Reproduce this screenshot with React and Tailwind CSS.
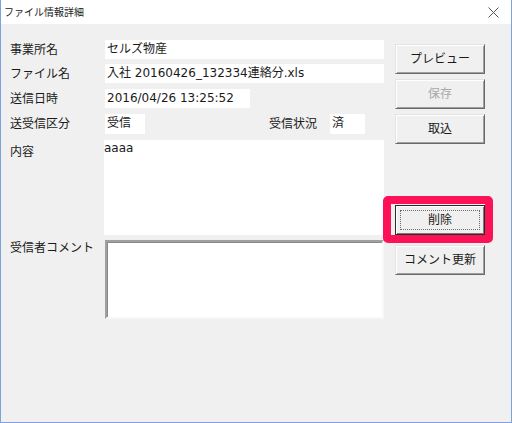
import React from 'react';

const fontCls = "font-['DejaVu_Sans','Noto_Sans_CJK_JP',sans-serif]";

// Windows クラシック風ボタン
const WinButton = ({ children, disabled = false, focused = false, className = '' }) => (
  <div
    className={`relative flex items-center justify-center w-[90px] h-[30px] bg-[#f0f0f0] text-[12px] border ${
      focused
        ? 'border-[#2b2b2b] shadow-[inset_1px_1px_0_#ffffff,inset_-1px_-1px_0_#7a7a7a]'
        : 'border-t-[#e3e3e3] border-l-[#e3e3e3] border-r-[#696969] border-b-[#696969] shadow-[inset_1px_1px_0_#ffffff,inset_-1px_-1px_0_#a0a0a0]'
    } ${disabled ? 'text-[#a8a8a8]' : 'text-[#1a1a1a]'} ${className}`}
  >
    {focused && <span className="absolute inset-[4px] border border-dotted border-[#6b6b6b]" />}
    <span className="relative">{children}</span>
  </div>
);

const Field = ({ children, className = '' }) => (
  <div className={`bg-white h-full pl-[2px] leading-[19px] whitespace-nowrap ${className}`}>{children}</div>
);

export default function App() {
  const rows = [
    { label: '事業所名', value: 'セルズ物産', w: 'flex-1', mt: 'mt-0' },
    { label: 'ファイル名', value: '入社 20160426_132334連絡分.xls', w: 'flex-1', mt: 'mt-[5px]' },
    { label: '送信日時', value: '2016/04/26 13:25:52', w: 'w-[145px]', mt: 'mt-[6px]' },
  ];

  return (
    <div className={`w-[512px] h-[423px] bg-[#f0f0f0] border-x border-b border-[#7ea2e0] text-[#1a1a1a] ${fontCls}`}>
      {/* タイトルバー */}
      <div className="h-[24px] bg-white flex items-center justify-between pl-[3px] pr-[12px]">
        <span className="text-[10px] text-[#222]">ファイル情報詳細</span>
        <svg width="11" height="11" viewBox="0 0 11 11">
          <path d="M0.5 0.5 L10.5 10.5 M10.5 0.5 L0.5 10.5" stroke="#555" strokeWidth="1" fill="none" />
        </svg>
      </div>

      <div className="flex">
        {/* 左側：項目 */}
        <div className="w-[383px] pl-[9px] pt-[16px] text-[12px]">
          {rows.map((r) => (
            <div key={r.label} className={`flex items-center h-[19px] ${r.mt}`}>
              <div className="w-[95px] shrink-0">{r.label}</div>
              <Field className={r.w}>{r.value}</Field>
            </div>
          ))}

          <div className="flex items-center h-[20px] mt-[6px]">
            <div className="w-[95px] shrink-0">送受信区分</div>
            <Field className="w-[40px]">受信</Field>
            <div className="ml-[124px] w-[61px]">受信状況</div>
            <Field className="w-[35px]">済</Field>
          </div>

          {/* 内容 */}
          <div className="flex items-start mt-[6px]">
            <div className="w-[95px] shrink-0 leading-[19px] pt-[3px]">内容</div>
            <div className="flex-1 h-[95px] bg-white leading-[16px] pl-[0px] -ml-[1px]">aaaa</div>
          </div>

          {/* 受信者コメント */}
          <div className="flex items-start mt-[5px]">
            <div className="w-[95px] shrink-0 leading-[17px]">受信者コメント</div>
            <div className="flex-1 h-[79px] bg-white border-2 border-t-[#a0a0a0] border-l-[#a0a0a0] border-r-[#f8f8f8] border-b-[#f8f8f8] shadow-[inset_1px_1px_0_#8a8a8a]" />
          </div>
        </div>

        {/* 右側：ボタン */}
        <div className="ml-[11px] pt-[20px] flex flex-col">
          <WinButton>プレビュー</WinButton>
          <WinButton disabled className="mt-[5px]">保存</WinButton>
          <WinButton className="mt-[5px]">取込</WinButton>
          <div className="relative mt-[61px]">
            <WinButton focused>削除</WinButton>
            <div className="absolute left-[-12px] right-[-8px] top-[-9px] bottom-[-8px] border-[8px] border-[#fd1157] rounded-[5px] pointer-events-none" />
          </div>
          <WinButton className="mt-[10px]">コメント更新</WinButton>
        </div>
      </div>
    </div>
  );
}
